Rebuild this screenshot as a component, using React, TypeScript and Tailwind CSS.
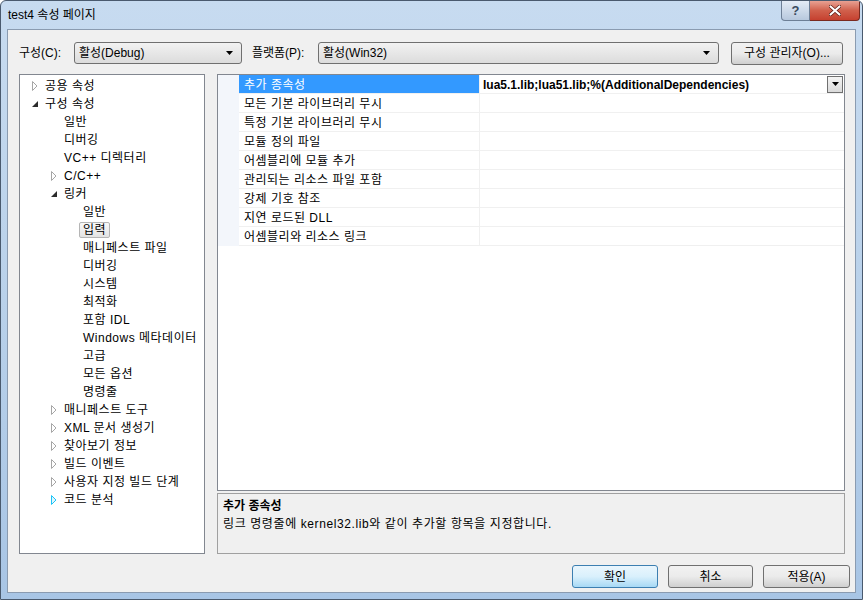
import React from 'react';

type Arrow = 'none' | 'closed' | 'open' | 'hover';

interface TreeItem {
  label: string;
  level: number;
  arrow: Arrow;
  selected?: boolean;
}

const TREE: TreeItem[] = [
  { label: '공용 속성', level: 0, arrow: 'closed' },
  { label: '구성 속성', level: 0, arrow: 'open' },
  { label: '일반', level: 1, arrow: 'none' },
  { label: '디버깅', level: 1, arrow: 'none' },
  { label: 'VC++ 디렉터리', level: 1, arrow: 'none' },
  { label: 'C/C++', level: 1, arrow: 'closed' },
  { label: '링커', level: 1, arrow: 'open' },
  { label: '일반', level: 2, arrow: 'none' },
  { label: '입력', level: 2, arrow: 'none', selected: true },
  { label: '매니페스트 파일', level: 2, arrow: 'none' },
  { label: '디버깅', level: 2, arrow: 'none' },
  { label: '시스템', level: 2, arrow: 'none' },
  { label: '최적화', level: 2, arrow: 'none' },
  { label: '포함 IDL', level: 2, arrow: 'none' },
  { label: 'Windows 메타데이터', level: 2, arrow: 'none' },
  { label: '고급', level: 2, arrow: 'none' },
  { label: '모든 옵션', level: 2, arrow: 'none' },
  { label: '명령줄', level: 2, arrow: 'none' },
  { label: '매니페스트 도구', level: 1, arrow: 'closed' },
  { label: 'XML 문서 생성기', level: 1, arrow: 'closed' },
  { label: '찾아보기 정보', level: 1, arrow: 'closed' },
  { label: '빌드 이벤트', level: 1, arrow: 'closed' },
  { label: '사용자 지정 빌드 단계', level: 1, arrow: 'closed' },
  { label: '코드 분석', level: 1, arrow: 'hover' },
];

const PROPS = [
  '추가 종속성',
  '모든 기본 라이브러리 무시',
  '특정 기본 라이브러리 무시',
  '모듈 정의 파일',
  '어셈블리에 모듈 추가',
  '관리되는 리소스 파일 포함',
  '강제 기호 참조',
  '지연 로드된 DLL',
  '어셈블리와 리소스 링크',
];

const indent = ['pl-[12px]', 'pl-[31px]', 'pl-[50px]'];

function TreeArrow({ kind }: { kind: Arrow }) {
  if (kind === 'none') return <span className="w-[13px] shrink-0" />;
  if (kind === 'open') {
    return (
      <span className="w-[13px] shrink-0 flex items-center">
        <svg width="6" height="6" viewBox="0 0 6 6">
          <polygon points="6,0 6,6 0,6" fill="#2b2b2b" />
        </svg>
      </span>
    );
  }
  const stroke = kind === 'hover' ? '#1cc4f7' : '#a6a6a6';
  const fill = kind === 'hover' ? '#e0f6fd' : '#ffffff';
  return (
    <span className="w-[13px] shrink-0 flex items-center">
      <svg width="6" height="10" viewBox="0 0 6 10">
        <polygon points="0.5,0.5 5,5 0.5,9.5" fill={fill} stroke={stroke} strokeWidth="1" />
      </svg>
    </span>
  );
}

function DownArrow() {
  return (
    <svg width="7" height="4" viewBox="0 0 7 4">
      <polygon points="0,0 7,0 3.5,4" fill="#000" />
    </svg>
  );
}

function Combo({ text, width }: { text: string; width: string }) {
  return (
    <div
      className={`${width} h-[22px] shrink-0 flex items-center justify-between pl-[4px] pr-[8px] border border-[#707070] rounded-[3px] bg-gradient-to-b from-[#f2f2f2] to-[#dcdcdc]`}
    >
      <span>{text}</span>
      <DownArrow />
    </div>
  );
}

function Button({ label, primary, width }: { label: string; primary?: boolean; width: string }) {
  return (
    <button
      className={`${width} h-[23px] shrink-0 rounded-[3px] border ${
        primary
          ? 'border-[#3c7fb1] bg-gradient-to-b from-[#eaf6fd] via-[#d9f0fc] to-[#a7d9f5]'
          : 'border-[#707070] bg-gradient-to-b from-[#f2f2f2] via-[#ebebeb] to-[#cfcfcf]'
      } text-black`}
    >
      {label}
    </button>
  );
}

export default function App() {
  return (
    <div className="w-[863px] h-[600px] flex flex-col bg-gradient-to-b from-[#c7dbf0] via-[#b9d1ea] to-[#a8c5e5] border border-[#4a5a6e] rounded-t-[6px] overflow-hidden text-[12px] text-black font-['Liberation_Sans','Noto_Sans_CJK_KR',sans-serif]">
      {/* Title bar */}
      <div className="h-[28px] shrink-0 flex items-start justify-between">
        <span className="pl-[7px] pt-[5px] text-[12px] text-black">test4 속성 페이지</span>
        <div className="flex mr-[2px]">
          <div className="w-[29px] h-[20px] flex items-center justify-center border border-[#6d7f96] border-t-0 rounded-bl-[4px] bg-gradient-to-b from-[#e4ecf6] to-[#b7c8dd] text-[13px] font-bold text-[#3a4a5e]">
            ?
          </div>
          <div className="w-[50px] h-[20px] flex items-center justify-center border border-[#7a2a20] border-t-0 border-l-0 rounded-br-[4px] bg-gradient-to-b from-[#e8a193] via-[#d0604c] to-[#c5402f]">
            <svg width="12" height="11" viewBox="0 0 12 11">
              <path d="M1.5 1.5 L10.5 9.5 M10.5 1.5 L1.5 9.5" stroke="#5a1a12" strokeWidth="3.6" strokeLinecap="round" />
              <path d="M1.5 1.5 L10.5 9.5 M10.5 1.5 L1.5 9.5" stroke="#ffffff" strokeWidth="2.2" strokeLinecap="round" />
            </svg>
          </div>
        </div>
      </div>

      {/* Client area */}
      <div className="flex-1 mx-[6px] mb-[6px] border border-[#8a9bb0] bg-[#f0f0f0] flex flex-col pl-[11px] pr-[10px] pt-[12px] pb-[3px]">
        {/* Config row */}
        <div className="h-[22px] flex items-center">
          <span className="w-[55px] shrink-0">구성(C):</span>
          <Combo text="활성(Debug)" width="w-[168px]" />
          <span className="ml-[10px] w-[66px] shrink-0">플랫폼(P):</span>
          <Combo text="활성(Win32)" width="w-[401px]" />
          <div className="ml-[12px]">
            <Button label="구성 관리자(O)..." width="w-[112px]" />
          </div>
        </div>

        {/* Panels */}
        <div className="mt-[10px] h-[480px] flex gap-[12px]">
          {/* Tree */}
          <div className="w-[186px] shrink-0 border border-[#828790] bg-white pt-[2px]">
            {TREE.map((t, i) => (
              <div key={i} className={`h-[18px] flex items-center ${indent[t.level]}`}>
                <TreeArrow kind={t.arrow} />
                <span
                  className={`tracking-[0.5px] ${
                    t.selected
                      ? '-ml-[4px] px-[3px] h-[16px] leading-[14px] border border-[#b5b5b5] rounded-[2px] bg-gradient-to-b from-[#f8f8f8] to-[#e3e3e3]'
                      : ''
                  }`}
                >
                  {t.label}
                </span>
              </div>
            ))}
          </div>

          {/* Property grid + description */}
          <div className="flex-1 flex flex-col">
            <div className="flex-1 border border-[#828790] bg-white">
              {PROPS.map((p, i) => (
                <div key={i} className="h-[19px] flex">
                  <div className="w-[21px] shrink-0 bg-[#f3f6fb]" />
                  <div className="flex-1 flex border-b border-[#f0f0f0]">
                    <div
                      className={`w-[241px] shrink-0 pl-[5px] pt-[2px] flex items-center tracking-[0.5px] border-r border-[#f0f0f0] ${
                        i === 0 ? 'bg-[#3399ff] text-white' : ''
                      }`}
                    >
                      {p}
                    </div>
                    <div className="flex-1 flex items-center justify-between pl-[3px] pr-[1px]">
                      {i === 0 && (
                        <>
                          <span className="font-bold pt-[1px]">lua5.1.lib;lua51.lib;%(AdditionalDependencies)</span>
                          <div className="w-[16px] h-[17px] border border-[#707070] bg-gradient-to-b from-[#f4f4f4] to-[#dadada] flex items-center justify-center">
                            <DownArrow />
                          </div>
                        </>
                      )}
                    </div>
                  </div>
                </div>
              ))}
            </div>
            <div className="mt-[2px] h-[61px] shrink-0 border border-[#a0a0a0] bg-[#f0f0f0] pl-[5px] pt-[3px]">
              <div className="h-[18px] leading-[18px] font-bold">추가 종속성</div>
              <div className="h-[18px] leading-[18px] tracking-[0.6px]">
                링크 명령줄에 kernel32.lib와 같이 추가할 항목을 지정합니다.
              </div>
            </div>
          </div>
        </div>

        {/* Buttons */}
        <div className="mt-[11px] flex justify-end gap-[10px] -mr-[5px]">
          <Button label="확인" primary width="w-[86px]" />
          <Button label="취소" width="w-[85px]" />
          <Button label="적용(A)" width="w-[87px]" />
        </div>
      </div>
    </div>
  );
}
